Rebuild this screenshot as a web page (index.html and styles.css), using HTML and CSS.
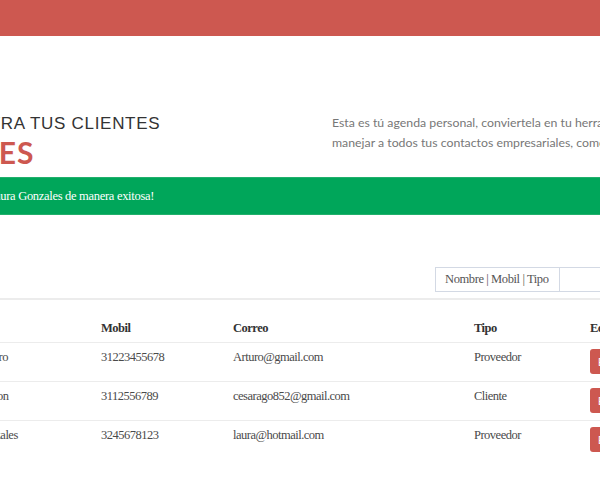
FILE: index.html
```html
<!DOCTYPE html>
<html lang="es">
<head>
<meta charset="utf-8">
<title>Agenda de clientes</title>
<link rel="stylesheet" href="styles.css">
</head>
<body>
<header class="topbar"></header>
<main class="page">
  <section class="hero">
    <div class="hero-title">
      <h2 class="kicker">ADMINISTRA TUS CLIENTES</h2>
      <h1 class="headline">CLIENTES</h1>
    </div>
    <p class="hero-text">Esta es tú agenda personal, conviertela en tu herramienta favorita para manejar a todos tus contactos empresariales, como clientes.</p>
  </section>
  <div class="alert">¡Se agregó a Laura Gonzales de manera exitosa!</div>
  <div class="search">
    <span class="search-addon">Nombre | Mobil | Tipo</span>
    <input class="search-input" type="text">
  </div>
  <table class="contacts">
    <colgroup>
      <col class="c-name"><col class="c-mobil"><col class="c-mail"><col class="c-tipo"><col class="c-edit">
    </colgroup>
    <thead>
      <tr><th>Nombre</th><th>Mobil</th><th>Correo</th><th>Tipo</th><th>Editar</th></tr>
    </thead>
    <tbody>
      <tr><td>Carlos Arturo</td><td>31223455678</td><td>Arturo@gmail.com</td><td>Proveedor</td><td><button class="btn">Editar</button></td></tr>
      <tr><td>Cesar Aragon</td><td>3112556789</td><td>cesarago852@gmail.com</td><td>Cliente</td><td><button class="btn">Editar</button></td></tr>
      <tr><td>Laura Gonzales</td><td>3245678123</td><td>laura@hotmail.com</td><td>Proveedor</td><td><button class="btn">Editar</button></td></tr>
    </tbody>
  </table>
</main>
</body>
</html>
```
FILE: styles.css
```css
html, body {
  margin: 0;
  padding: 0;
  background: #fff;
  overflow: hidden;
}
body {
  font-family: "Liberation Serif", serif;
  color: #555;
}
.topbar {
  height: 36px;
  background: #cd5850;
}
.page {
  margin-left: -100px;
  width: 1200px;
}
.hero {
  display: grid;
  grid-template-columns: 432px 400px;
  padding-top: 76px;
}
.hero-title {
  padding-top: 2px;
  padding-left: 14px;
}
.kicker {
  margin: 0;
  font-family: "Liberation Sans", sans-serif;
  font-weight: normal;
  font-size: 17px;
  line-height: 20px;
  letter-spacing: 0.7px;
  color: #333;
}
.headline {
  margin: 0 0 0 -24px;
  font-family: Lato, sans-serif;
  font-weight: bold;
  font-size: 30px;
  line-height: 36px;
  letter-spacing: 1px;
  color: #cd5850;
}
.hero-text {
  margin: 0;
  padding-top: 1px;
  font-family: Lato, sans-serif;
  font-size: 12.3px;
  line-height: 20px;
  color: #777;
}
.alert {
  margin-top: 7px;
  height: 36px;
  line-height: 36px;
  background: #00a65a;
  border: 1px solid #22b06c;
  color: #fff;
  font-size: 12.5px;
  letter-spacing: -0.3px;
  padding-left: 25px;
}
.search {
  display: flex;
  margin: 52px 0 0 535px;
  height: 25px;
}
.search-addon {
  box-sizing: border-box;
  width: 125px;
  border: 1px solid #d3d9e4;
  padding-left: 9px;
  font-size: 12.5px;
  letter-spacing: -0.4px;
  line-height: 23px;
  color: #555;
}
.search-input {
  box-sizing: border-box;
  width: 300px;
  height: 25px;
  border: 1px solid #d3d9e4;
  border-left: 0;
  margin: 0;
  padding: 0;
}
.contacts {
  margin-top: 6px;
  margin-left: 38px;
  border-collapse: collapse;
  table-layout: fixed;
  width: 760px;
  border-top: 2px solid #ececec;
  font-size: 12.5px;
  letter-spacing: -0.5px;
}
.c-name { width: 155px; }
.c-mobil { width: 132px; }
.c-mail { width: 241px; }
.c-tipo { width: 116px; }
.c-edit { width: 116px; }
.contacts th {
  text-align: left;
  font-weight: bold;
  color: #333;
  line-height: 16px;
  padding: 20px 8px 6px;
  border-bottom: 1px solid #ececec;
  vertical-align: top;
}
.contacts td {
  line-height: 16px;
  padding: 6px 8px 7px;
  vertical-align: top;
  color: #4a4a4a;
  white-space: nowrap;
}
.contacts tbody tr + tr td {
  border-top: 1px solid #ececec;
}
.btn {
  display: block;
  height: 25px;
  padding: 0 10px 0 8px;
  border: 0;
  border-radius: 3px;
  background: #cd5850;
  color: #fff;
  font-family: "Liberation Sans", sans-serif;
  font-size: 11px;
}
```
